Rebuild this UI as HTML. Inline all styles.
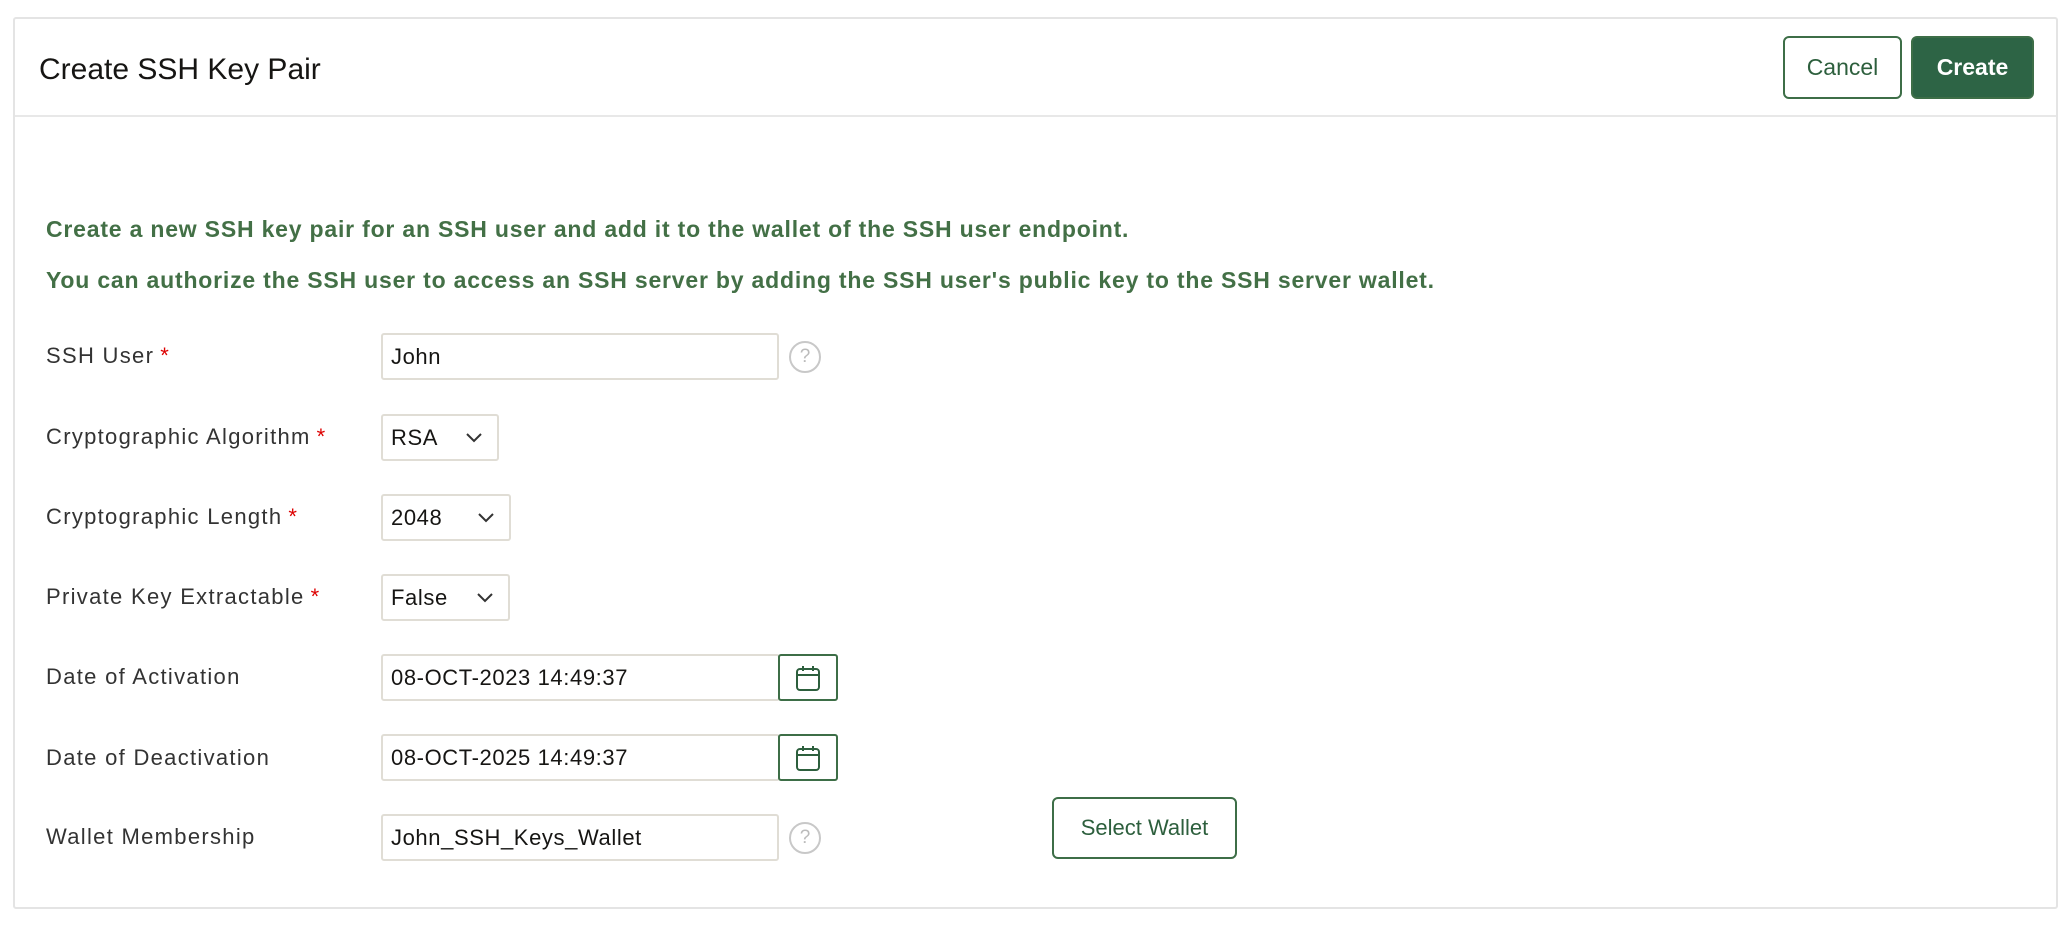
<!DOCTYPE html>
<html><head><meta charset="utf-8"><style>
*{box-sizing:border-box;margin:0;padding:0}
body{width:2072px;height:930px;background:#fff;font-family:"Liberation Sans",sans-serif;position:relative;overflow:hidden;color:#222}
.panel{position:absolute;left:13px;top:17px;width:2045px;height:892px;border:2px solid #e4e4e4;border-radius:3px}
.hdr{position:absolute;left:0;top:0;width:100%;height:98px;border-bottom:2px solid #e8e8e8}
.title{position:absolute;left:24px;top:34px;font-size:30px;color:#161513}
.btn{position:absolute;border-radius:6px;font-size:23px;display:flex;align-items:center;justify-content:center}
.cancel{left:1768px;top:17px;width:119px;height:63px;border:2px solid #3d6e47;color:#2d5f3d}
.create{left:1896px;top:17px;width:123px;height:63px;background:#2d6445;border:2px solid #3d6e47;color:#fff;font-weight:bold}
.g{position:absolute;left:46px;font-size:23px;letter-spacing:0.8px;font-weight:bold;color:#437046}
.lbl{position:absolute;left:46px;font-size:22px;letter-spacing:1.3px;color:#333}
.lbl b{color:#d00;font-weight:normal;margin-left:6px}
.in{position:absolute;left:381px;height:47px;border:2px solid #e0ddd5;border-radius:3px;font-size:22px;letter-spacing:0.6px;padding-left:8px;display:flex;align-items:center;color:#161513}
.sel svg{position:absolute;right:14px;top:16px}
.cal{position:absolute;left:778px;width:60px;height:47px;border:2px solid #3d6e47;border-radius:3px;display:flex;align-items:center;justify-content:center}
.help{position:absolute;left:789px;width:32px;height:32px;border:2px solid #c8c8c8;border-radius:50%;color:#bbb;font-size:19px;display:flex;align-items:center;justify-content:center}
.sw{left:1052px;top:797px;width:185px;height:62px;border:2px solid #3d6e47;color:#2d5f3d;font-size:22px}
</style></head><body>
<div class="panel"><div class="hdr"><div class="title">Create SSH Key Pair</div>
<div class="btn cancel">Cancel</div><div class="btn create">Create</div></div></div>
<div class="g" style="top:216px">Create a new SSH key pair for an SSH user and add it to the wallet of the SSH user endpoint.</div>
<div class="g" style="top:267px">You can authorize the SSH user to access an SSH server by adding the SSH user's public key to the SSH server wallet.</div>

<div class="lbl" style="top:343px">SSH User<b>*</b></div>
<div class="in" style="top:333px;width:398px">John</div>
<div class="help" style="top:341px">?</div>

<div class="lbl" style="top:424px">Cryptographic Algorithm<b>*</b></div>
<div class="in sel" style="top:414px;width:118px">RSA<svg width="18" height="12"><path d="M2 2l7 7 7-7" fill="none" stroke="#333" stroke-width="2"/></svg></div>

<div class="lbl" style="top:504px">Cryptographic Length<b>*</b></div>
<div class="in sel" style="top:494px;width:130px">2048<svg width="18" height="12"><path d="M2 2l7 7 7-7" fill="none" stroke="#333" stroke-width="2"/></svg></div>

<div class="lbl" style="top:584px">Private Key Extractable<b>*</b></div>
<div class="in sel" style="top:574px;width:129px">False<svg width="18" height="12"><path d="M2 2l7 7 7-7" fill="none" stroke="#333" stroke-width="2"/></svg></div>

<div class="lbl" style="top:664px">Date of Activation</div>
<div class="in" style="top:654px;width:399px">08-OCT-2023 14:49:37</div>
<div class="cal" style="top:654px"><svg width="30" height="30" viewBox="0 0 30 30"><rect x="4" y="6" width="22" height="21" rx="3" fill="none" stroke="#2d5f3d" stroke-width="2"/><path d="M4 12h22M10 3v5M20 3v5" stroke="#2d5f3d" stroke-width="2"/></svg></div>

<div class="lbl" style="top:745px">Date of Deactivation</div>
<div class="in" style="top:734px;width:399px">08-OCT-2025 14:49:37</div>
<div class="cal" style="top:734px"><svg width="30" height="30" viewBox="0 0 30 30"><rect x="4" y="6" width="22" height="21" rx="3" fill="none" stroke="#2d5f3d" stroke-width="2"/><path d="M4 12h22M10 3v5M20 3v5" stroke="#2d5f3d" stroke-width="2"/></svg></div>

<div class="lbl" style="top:824px">Wallet Membership</div>
<div class="in" style="top:814px;width:398px">John_SSH_Keys_Wallet</div>
<div class="help" style="top:822px">?</div>
<div class="btn sw">Select Wallet</div>
</body></html>
